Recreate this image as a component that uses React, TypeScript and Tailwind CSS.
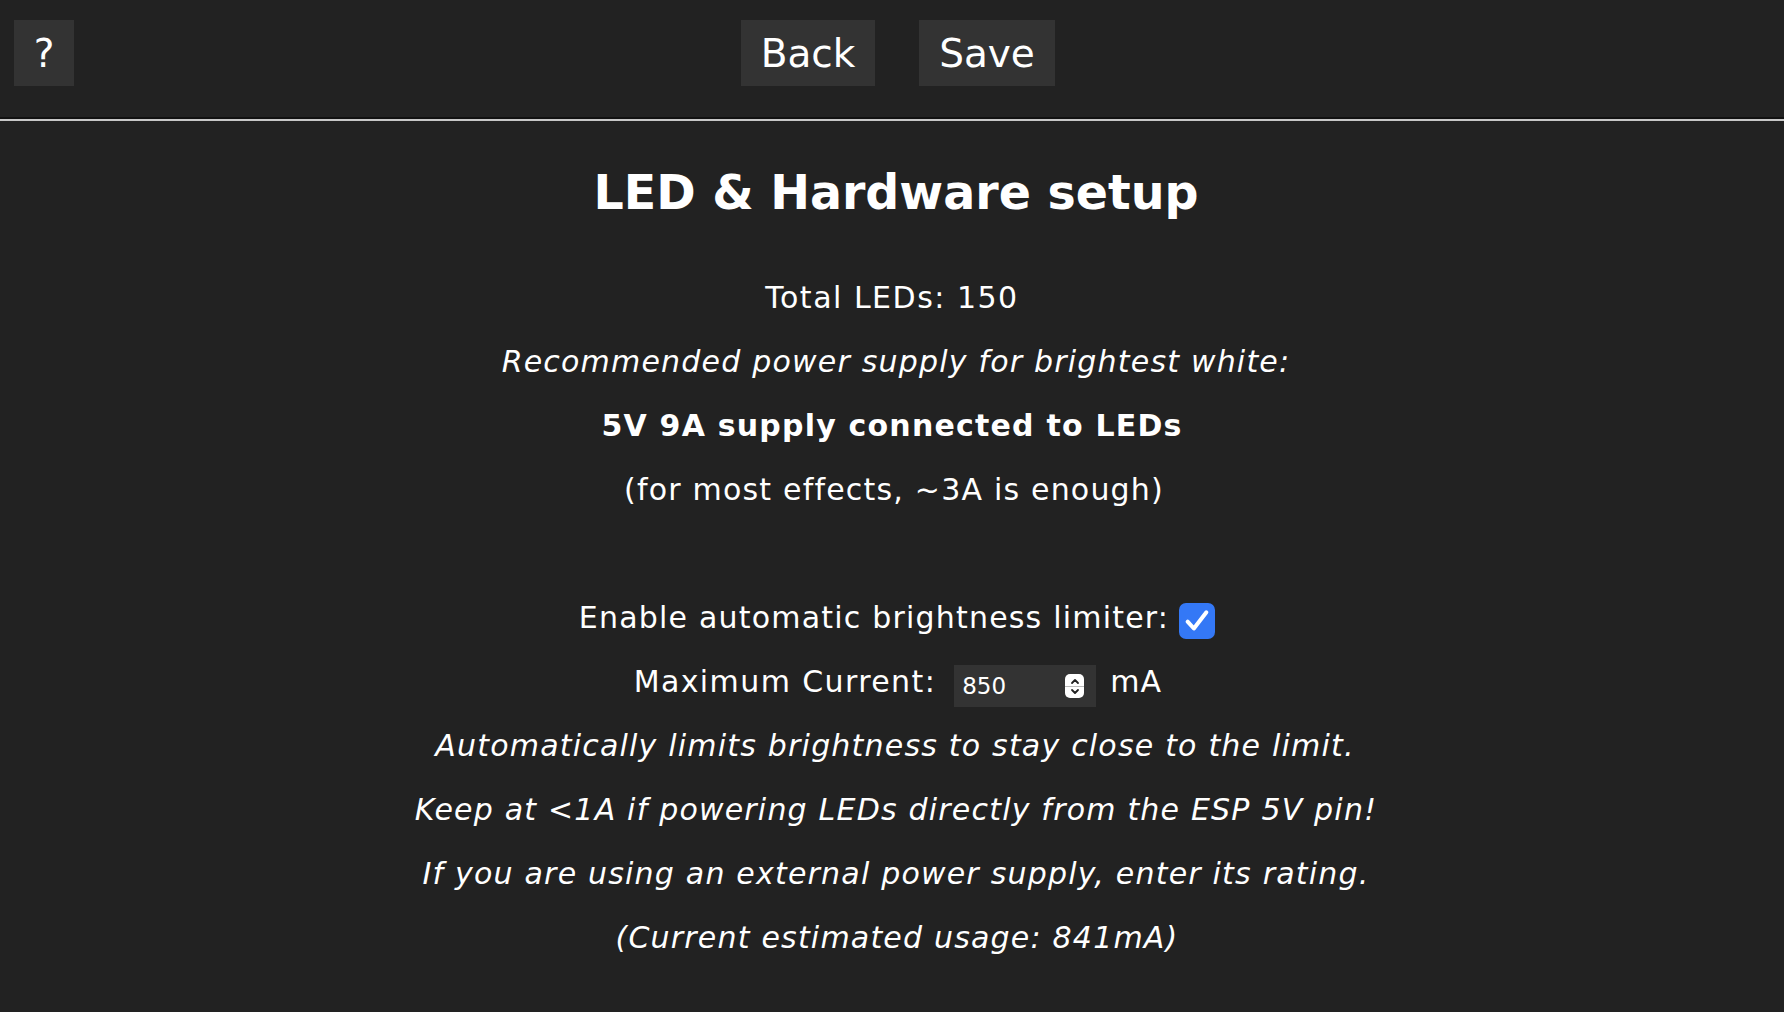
import React from "react";

export default function App() {
  const font = { fontFamily: '"DejaVu Sans", Verdana, sans-serif' };
  return (
    <div className="min-h-[1012px] w-full bg-[#222222] text-white" style={font}>
      <div className="relative h-[117px]">
        <button className="absolute left-[14px] top-[20px] h-[66px] w-[60px] bg-[#333333] text-[39px] leading-none text-white">
          ?
        </button>
        <div className="flex justify-center gap-[44px] pt-[20px] pl-[12px]">
          <button className="h-[66px] w-[134px] bg-[#333333] text-[39px] leading-none text-white">Back</button>
          <button className="h-[66px] w-[136px] bg-[#333333] text-[39px] leading-none text-white">Save</button>
        </div>
      </div>
      <div className="h-[2px] bg-[#111111]" />
      <div className="h-[2px] bg-[#c8c8c8]" />
      <div className="flex flex-col items-center pt-[40px] text-center">
        <h2 className="pl-[8px] text-[47.5px] font-bold leading-[64px]">LED &amp; Hardware setup</h2>
        <div className="mt-[41px] flex flex-col items-center text-[30px] leading-[64px] tracking-[1.2px]">
          <div className="tracking-[1.5px]">Total LEDs: 150</div>
          <div className="pl-[8px] italic">Recommended power supply for brightest white:</div>
          <div className="font-bold">5V 9A supply connected to LEDs</div>
          <div className="pl-[4px]">(for most effects, ~3A is enough)</div>
          <div className="h-[64px]" />
          <div className="flex items-center pl-[10px]">
            <span>Enable automatic brightness limiter:</span>
            <span className="ml-[10px] mt-[6px] flex h-[36px] w-[36px] items-center justify-center rounded-[7px] bg-[#3478f6]">
              <svg width="30" height="30" viewBox="0 0 24 24" fill="none" stroke="white" strokeWidth="3.2" strokeLinecap="round" strokeLinejoin="round">
                <path d="M4.5 12.5l5 5.5L19.5 5" />
              </svg>
            </span>
          </div>
          <div className="flex items-center pl-[12px]">
            <span className="tracking-[1.4px]">Maximum Current:</span>
            <span className="ml-[18px] mt-[8px] flex h-[42px] w-[142px] items-center justify-between bg-[#333333] pl-[8px] pr-[12px] tracking-normal">
              <span className="text-[23px] leading-none">850</span>
              <span className="flex h-[24px] w-[19px] flex-col items-center justify-center rounded-[5px] bg-white">
                <svg width="12" height="9" viewBox="0 0 12 9" fill="none" stroke="#222" strokeWidth="1.8" strokeLinecap="round" strokeLinejoin="round">
                  <path d="M3 6l3-3 3 3" />
                </svg>
                <span className="h-[1px] w-[19px] bg-[#bbbbbb]" />
                <svg width="12" height="9" viewBox="0 0 12 9" fill="none" stroke="#222" strokeWidth="1.8" strokeLinecap="round" strokeLinejoin="round">
                  <path d="M3 3l3 3 3-3" />
                </svg>
              </span>
            </span>
            <span className="ml-[14px]">mA</span>
          </div>
          <div className="pl-[6px] italic">Automatically limits brightness to stay close to the limit.</div>
          <div className="pl-[8px] italic">Keep at &lt;1A if powering LEDs directly from the ESP 5V pin!</div>
          <div className="pl-[8px] italic">If you are using an external power supply, enter its rating.</div>
          <div className="pl-[10px] italic">(Current estimated usage: 841mA)</div>
        </div>
      </div>
    </div>
  );
}
